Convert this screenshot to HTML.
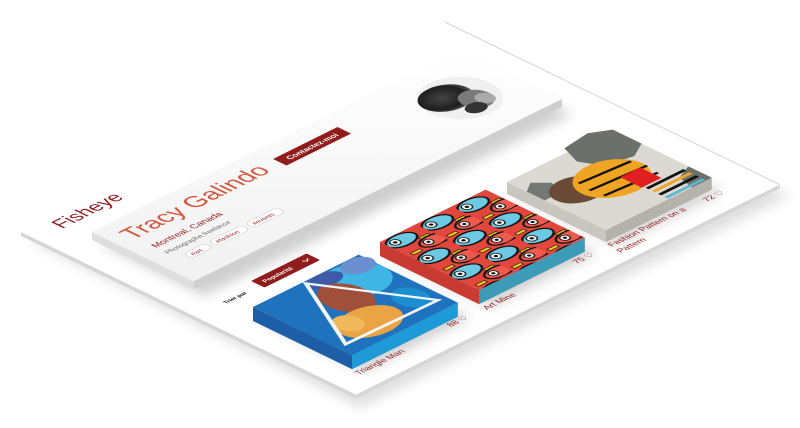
<!DOCTYPE html>
<html><head><meta charset="utf-8"><style>
html,body{margin:0;padding:0;background:#fff;width:800px;height:428px;overflow:hidden}
svg{display:block}
text{font-family:"Liberation Sans",sans-serif}
</style></head><body>
<svg width="800" height="428" viewBox="0 0 800 428" xmlns="http://www.w3.org/2000/svg">
<defs>
<filter id="blur6" x="-20%" y="-20%" width="140%" height="140%"><feGaussianBlur stdDeviation="6"/></filter>
<linearGradient id="cardg" x1="0" y1="0" x2="0" y2="1"><stop offset="0" stop-color="#ffffff"/><stop offset="1" stop-color="#f1f1f1"/></linearGradient>
<radialGradient id="avg" cx="0.45" cy="0.45" r="0.6"><stop offset="0" stop-color="#444"/><stop offset="0.7" stop-color="#1e1e1e"/><stop offset="1" stop-color="#666"/></radialGradient>
<pattern id="birds" width="40" height="36" patternUnits="userSpaceOnUse">
<rect width="40" height="36" fill="#e2463d"/>
<ellipse cx="14" cy="10" rx="15" ry="9" fill="#6cc9e3" stroke="#111" stroke-width="2"/>
<circle cx="8" cy="9" r="4.5" fill="#fff" stroke="#111" stroke-width="1.2"/>
<circle cx="8" cy="9" r="1.8" fill="#111"/>
<rect x="26" y="17" width="10" height="3.5" fill="#f2d21a" stroke="#111" stroke-width="0.8"/>
<ellipse cx="32" cy="28" rx="14" ry="8" fill="#f05a4e" stroke="#111" stroke-width="2"/>
<circle cx="27" cy="27" r="4.2" fill="#fff" stroke="#111" stroke-width="1.2"/>
<circle cx="27" cy="27" r="1.7" fill="#111"/>
<rect x="4" y="30" width="10" height="3.5" fill="#f2d21a" stroke="#111" stroke-width="0.8"/>
</pattern>
</defs>

<polygon points="30,240 450,36 790,196 360,408" fill="#000" opacity="0.12" filter="url(#blur6)"/>
<polygon points="21,232 355.8,394.6 779.6,184.6 779.6,188.6 355.8,398.6 21,236" fill="#d6d6d6"/>
<polygon points="21,232 444.8,22 779.6,184.6 355.8,394.6" fill="#fff"/>
<polyline points="444.8,22 779.6,184.6" fill="none" stroke="#c8c8c8" stroke-width="0.7"/>

<text transform="matrix(0.896,-0.444,0.9,0.437,62,229)" font-size="20" fill="#901c1c">Fisheye</text>

<polygon points="100,244 468,62 572,114 204,296" fill="#000" opacity="0.18" filter="url(#blur6)"/>
<polygon points="92,232 193.7,281.4 562,98.9 562,106.9 193.7,289.4 92,240" fill="#dedede"/>
<polygon points="193.7,281.4 562,98.9 562,106.9 193.7,289.4" fill="#cfcfcf"/>
<polygon points="92,232 460.3,49.5 562,98.9 193.7,281.4" fill="url(#cardg)"/>

<text transform="matrix(0.896,-0.444,0.9,0.437,133,240)" font-size="25" fill="#d3573c">Tracy Galindo</text>
<text transform="matrix(0.896,-0.444,0.9,0.437,156,248)" font-size="9.5" fill="#901c1c">Montreal, Canada</text>
<text transform="matrix(0.896,-0.444,0.9,0.437,168,254)" font-size="7" fill="#666">Photographe freelance</text>

<g transform="matrix(0.896,-0.444,0.9,0.437,183,254)">
<rect x="0" y="0" width="24" height="10" rx="5" fill="#fff" stroke="#ccc" stroke-width="0.7"/>
<text x="4" y="7.5" font-size="6.5" fill="#901c1c">#art</text>
<rect x="28" y="0" width="37" height="10" rx="5" fill="#fff" stroke="#ccc" stroke-width="0.7"/>
<text x="32" y="7.5" font-size="6.5" fill="#901c1c">#fashion</text>
<rect x="69" y="0" width="36" height="10" rx="5" fill="#fff" stroke="#ccc" stroke-width="0.7"/>
<text x="73" y="7.5" font-size="6.5" fill="#901c1c">#events</text>
</g>

<g transform="matrix(0.896,-0.444,0.9,0.437,273,159)">
<rect x="0" y="0" width="72" height="15" fill="#901c1c"/>
<text x="36" y="10.5" font-size="8" font-weight="bold" fill="#fff" text-anchor="middle">Contactez-moi</text>
</g>

<g transform="matrix(0.896,-0.444,0.9,0.437,460,98)">
<circle r="34" fill="#f0f0f0"/>
<ellipse cx="-8" cy="-8" rx="24" ry="20" fill="url(#avg)"/>
<ellipse cx="8" cy="10" rx="14" ry="15" fill="#7a7a7a"/>
<ellipse cx="14" cy="14" rx="8" ry="9" fill="#aaa"/>
<ellipse cx="-2" cy="20" rx="10" ry="8" fill="#333"/>
</g>

<text transform="matrix(0.896,-0.444,0.9,0.437,226,304)" font-size="6" font-weight="bold" fill="#111">Trier par</text>
<g transform="matrix(0.896,-0.444,0.9,0.437,251,281)">
<rect width="62" height="15" rx="1.5" fill="#901c1c"/>
<text x="6" y="10" font-size="6.5" font-weight="bold" fill="#fff">Popularité</text>
<polyline points="51,6 54,9 57,6" fill="none" stroke="#fff" stroke-width="1.2"/>
</g>

<polygon points="262,322 368,270 470,318 364,372" fill="#000" opacity="0.18" filter="url(#blur6)"/>
<polygon points="389,257 495,205 597,253 491,307" fill="#000" opacity="0.18" filter="url(#blur6)"/>
<polygon points="516,196 622,144 724,192 618,246" fill="#000" opacity="0.15" filter="url(#blur6)"/>

<polygon points="253,307 352,355.1 457.7,302.7 457.7,316.7 352,369.1 253,321" fill="#1d5ea6"/>
<polygon points="352,355.1 457.7,302.7 457.7,316.7 352,369.1" fill="#1e9ad6"/>
<g transform="matrix(0.896,-0.444,0.9,0.437,253,307)">
<rect width="118" height="110" fill="#1f72bd"/>
<ellipse cx="88" cy="28" rx="30" ry="26" fill="#3eb5e5"/>
<ellipse cx="105" cy="12" rx="16" ry="12" fill="#6b8fd0"/>
<ellipse cx="70" cy="10" rx="18" ry="10" fill="#3d5aa8"/>
<ellipse cx="62" cy="42" rx="20" ry="26" fill="#a0503a"/>
<ellipse cx="48" cy="82" rx="30" ry="22" fill="#eba444"/>
<ellipse cx="34" cy="72" rx="12" ry="14" fill="#f0b85a"/>
<ellipse cx="98" cy="78" rx="14" ry="18" fill="#1c8fd0"/>
<polygon points="56,3 110,96 9,94" fill="none" stroke="#f2f6fa" stroke-width="3.5"/>
</g>
<text transform="matrix(0.896,-0.444,0.9,0.437,359,375)" font-size="9" fill="#901c1c">Triangle Man</text>
<text transform="matrix(0.896,-0.444,0.9,0.437,451,327)" font-size="9" fill="#901c1c">88 ♡</text>

<polygon points="380,242 479,290.1 584.7,237.7 584.7,251.7 479,304.1 380,256" fill="#c93a33"/>
<polygon points="479,290.1 584.7,237.7 584.7,251.7 479,304.1" fill="#3c9cb8"/>
<g transform="matrix(0.896,-0.444,0.9,0.437,380,242)">
<rect width="118" height="110" fill="url(#birds)"/>
</g>
<text transform="matrix(0.896,-0.444,0.9,0.437,487,310)" font-size="9" fill="#901c1c">Art Mine</text>
<text transform="matrix(0.896,-0.444,0.9,0.437,577,264)" font-size="9" fill="#901c1c">75 ♡</text>

<polygon points="507,182 606,230.1 711.7,177.7 711.7,189.7 606,242.1 507,194" fill="#c9c6c0"/>
<polygon points="606,230.1 711.7,177.7 711.7,189.7 606,242.1" fill="#b5b2ac"/>
<g transform="matrix(0.896,-0.444,0.9,0.437,507,182)">
<rect width="118" height="110" fill="#dcd9d3"/>
<polygon points="70,-6 100,-10 118,0 118,32 100,42 72,36 62,16" fill="#6b706d"/>
<polygon points="0,22 12,14 24,26 16,42 0,42" fill="#747875"/>
<polygon points="100,92 118,84 118,110 96,110" fill="#6b706d"/>
<ellipse cx="30" cy="48" rx="24" ry="20" fill="#6b4a36"/>
<ellipse cx="62" cy="55" rx="34" ry="28" fill="#f0a424"/>
<g stroke="#111" stroke-width="3">
<line x1="38" y1="42" x2="92" y2="46"/><line x1="36" y1="56" x2="96" y2="60"/><line x1="38" y1="70" x2="94" y2="74"/>
</g>
<g stroke-width="3.5">
<line x1="70" y1="86" x2="112" y2="86" stroke="#111"/><line x1="70" y1="93" x2="112" y2="93" stroke="#f0a424"/><line x1="70" y1="100" x2="112" y2="100" stroke="#111"/><line x1="70" y1="107" x2="112" y2="107" stroke="#5bb8d0"/>
</g>
<rect x="68" y="58" width="22" height="24" fill="#e02020"/>
</g>
<text transform="matrix(0.896,-0.444,0.9,0.437,612,247)" font-size="9" fill="#901c1c">Fashion Pattern on a</text>
<text transform="matrix(0.896,-0.444,0.9,0.437,621,253)" font-size="9" fill="#901c1c">Pattern</text>
<text transform="matrix(0.896,-0.444,0.9,0.437,707,202)" font-size="9" fill="#901c1c">72 ♡</text>
</svg>
</body></html>
